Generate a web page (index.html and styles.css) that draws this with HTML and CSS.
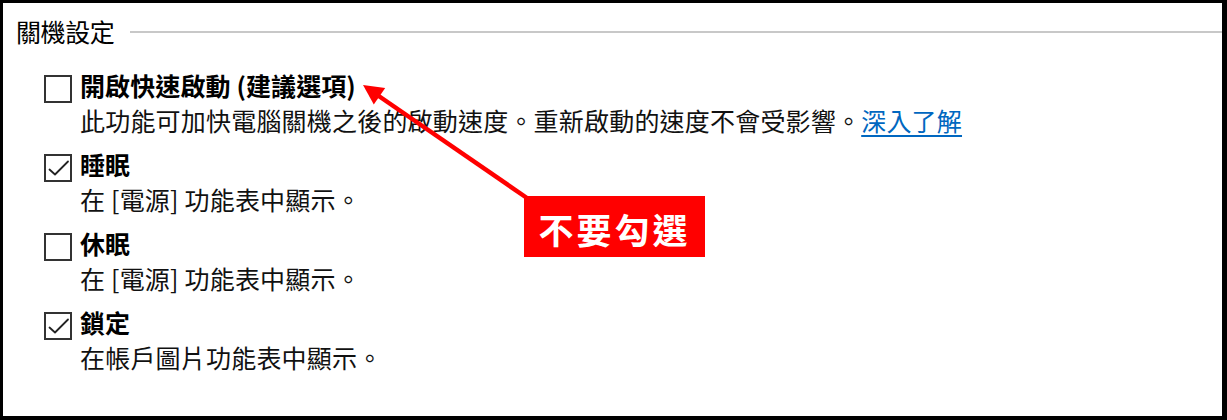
FILE: index.html
```html
<!DOCTYPE html>
<html lang="zh-Hant">
<head>
<meta charset="utf-8">
<title>關機設定</title>
<link rel="stylesheet" href="styles.css">
</head>
<body>
<div class="frame">
  <div class="header">
    <span class="title">關機設定</span>
    <span class="rule"></span>
  </div>
  <div class="options">
    <div class="option">
      <span class="checkbox"></span>
      <div class="text">
        <div class="label">開啟快速啟動 (建議選項)</div>
        <div class="desc">此功能可加快電腦關機之後的啟動速度。重新啟動的速度不會受影響。<a class="link" href="#">深入了解</a></div>
      </div>
    </div>
    <div class="option">
      <span class="checkbox checked"><svg viewBox="0 0 28 28" width="28" height="28"><polyline points="5.5,15.5 11,20.5 24,7.5" /></svg></span>
      <div class="text">
        <div class="label">睡眠</div>
        <div class="desc">在 [電源] 功能表中顯示。</div>
      </div>
    </div>
    <div class="option">
      <span class="checkbox"></span>
      <div class="text">
        <div class="label">休眠</div>
        <div class="desc">在 [電源] 功能表中顯示。</div>
      </div>
    </div>
    <div class="option">
      <span class="checkbox checked"><svg viewBox="0 0 28 28" width="28" height="28"><polyline points="5.5,15.5 11,20.5 24,7.5" /></svg></span>
      <div class="text">
        <div class="label">鎖定</div>
        <div class="desc">在帳戶圖片功能表中顯示。</div>
      </div>
    </div>
  </div>
  <svg class="arrow" width="1227" height="420" viewBox="0 0 1227 420">
    <line x1="527" y1="198" x2="378" y2="95.5" />
    <polygon points="363,85 373.8,104.5 385.2,88.1" />
  </svg>
  <div class="callout">不要勾選</div>
</div>
</body>
</html>
```

FILE: styles.css
```css
html, body {
  margin: 0;
  padding: 0;
  background: #ffffff;
}

.frame {
  position: relative;
  box-sizing: border-box;
  width: 1227px;
  height: 420px;
  border-style: solid;
  border-color: #000000;
  border-width: 3px 5px 4px 3px;
  padding: 11px 0 0 13px;
  background: #ffffff;
  font-family: "Noto Sans CJK TC", "Noto Sans CJK SC", sans-serif;
  font-size: 25px;
  line-height: 35px;
  color: #000000;
  overflow: hidden;
}

.header {
  display: flex;
  align-items: center;
  gap: 16px;
}

.title {
  font-weight: 400;
  white-space: nowrap;
  letter-spacing: -0.4px;
}

.rule {
  flex: 1;
  height: 2px;
  background: #c8c8c8;
}

.options {
  margin-top: 19px;
  padding-left: 28px;
  display: flex;
  flex-direction: column;
  gap: 9px;
}

.option {
  display: flex;
  align-items: flex-start;
  gap: 8px;
}

.checkbox {
  box-sizing: border-box;
  flex: none;
  width: 28px;
  height: 28px;
  margin-top: 7px;
  border: 2px solid #333333;
  background: #ffffff;
  position: relative;
}

.checkbox svg {
  position: absolute;
  left: -2px;
  top: -2px;
}

.checkbox polyline {
  fill: none;
  stroke: #222222;
  stroke-width: 1.8;
  stroke-linecap: round;
  stroke-linejoin: round;
}

.label {
  font-weight: 700;
  white-space: nowrap;
  letter-spacing: 0.1px;
}

.desc {
  white-space: nowrap;
  color: #111111;
  letter-spacing: 0.2px;
}

.link {
  color: #0067c0;
  text-decoration: underline;
  text-underline-offset: 4px;
  text-decoration-thickness: 1.5px;
}

.arrow {
  position: absolute;
  left: -3px;
  top: -3px;
  pointer-events: none;
}

.arrow line {
  stroke: #ff0000;
  stroke-width: 4.5;
}

.arrow polygon {
  fill: #ff0000;
}

.callout {
  position: absolute;
  left: 521px;
  top: 193px;
  width: 181px;
  height: 61px;
  background: #ff0000;
  color: #ffffff;
  display: flex;
  align-items: center;
  justify-content: center;
  font-size: 35px;
  font-weight: 700;
  letter-spacing: 3px;
  line-height: 1;
  padding-top: 3px;
  box-sizing: border-box;
}
```
